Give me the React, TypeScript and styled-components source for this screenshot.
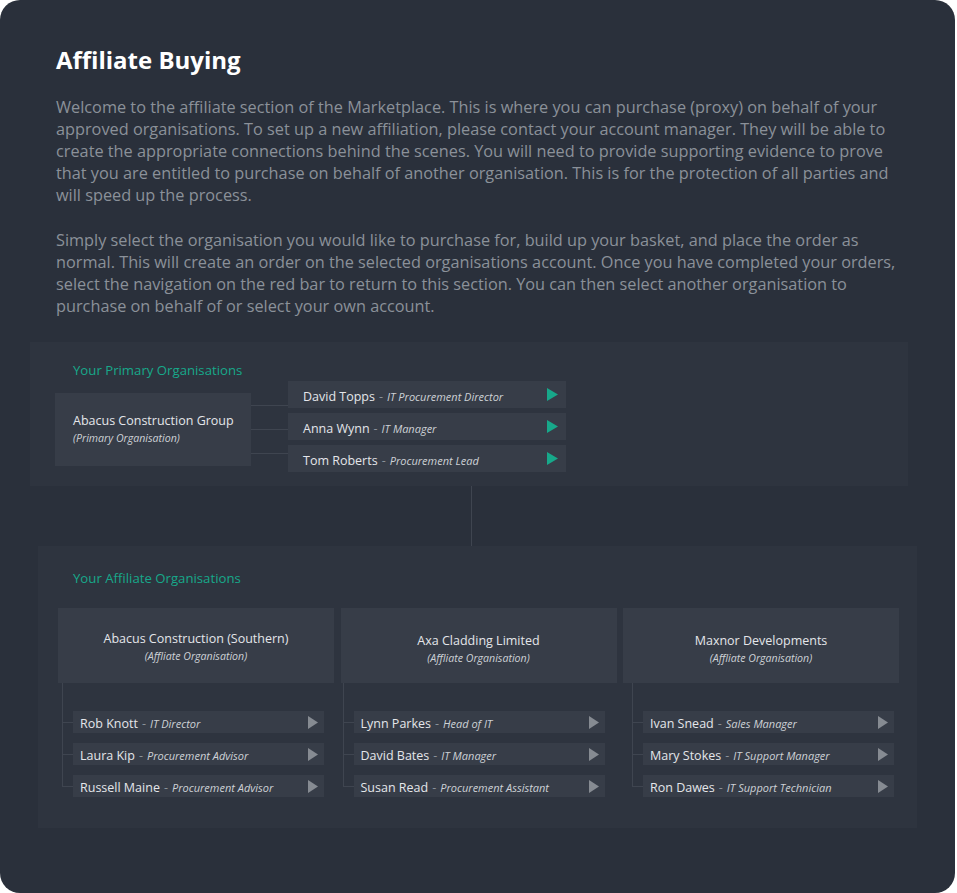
import React from "react";
import styled, { createGlobalStyle } from "styled-components";

const C = {
  page: "#ffffff",
  card: "#2a303b",
  panel: "#2e343f",
  box: "#373d48",
  line: "#3f4550",
  teal: "#17a88a",
  text: "#e4e6ea",
  role: "#cdd1d6",
  muted: "#8b9199",
  arrow: "#868b92",
};

const FONT = `"Open Sans", "Noto Sans", "Liberation Sans", sans-serif`;

const Global = createGlobalStyle`
  html, body { margin: 0; padding: 0; background: ${C.page}; }
  body { font-family: ${FONT}; }
  * { box-sizing: border-box; }
`;

const Card = styled.div`
  width: 955px;
  height: 893px;
  background: ${C.card};
  border-radius: 20px;
  padding-top: 44px;
  overflow: hidden;
`;

const Intro = styled.div`
  padding: 0 56px;
`;

const Title = styled.h1`
  margin: 0;
  font-size: 24px;
  line-height: 32px;
  font-weight: 700;
  color: #ffffff;
`;

const Para = styled.p`
  margin: 20px 0 0;
  font-size: 16.3px;
  line-height: 22px;
  color: ${C.muted};
  white-space: nowrap;
  & + & { margin-top: 23px; }
`;

const Panel = styled.section<{ $left: number; $width: number; $pt: number; $pb: number; $mt?: number }>`
  margin-left: ${(p) => p.$left}px;
  margin-top: ${(p) => p.$mt ?? 0}px;
  width: ${(p) => p.$width}px;
  background: ${C.panel};
  padding: ${(p) => p.$pt}px 0 ${(p) => p.$pb}px;
`;

const Heading = styled.h2<{ $indent: number }>`
  margin: 0;
  padding-left: ${(p) => p.$indent}px;
  font-size: 13.2px;
  line-height: 20px;
  font-weight: 400;
  color: ${C.teal};
`;

const PrimaryRow = styled.div`
  display: flex;
  align-items: flex-start;
  margin-left: 25px;
  margin-top: 1px;
`;

const OrgBox = styled.div`
  width: 196px;
  height: 73px;
  background: ${C.box};
  padding: 0 0 2px 18px;
  display: flex;
  flex-direction: column;
  justify-content: center;
  margin-top: 12px;
  white-space: nowrap;
`;

const OrgName = styled.div`
  font-size: 12.5px;
  line-height: 19px;
  color: ${C.text};
  white-space: nowrap;
`;

const OrgSub = styled.div`
  font-size: 10.6px;
  line-height: 17px;
  font-style: italic;
  color: ${C.role};
`;

const Connectors = styled.div`
  width: 37px;
  height: 73px;
  margin-top: 12px;
  display: flex;
  flex-direction: column;
  justify-content: space-around;
`;

const HLine = styled.div`
  height: 1px;
  background: ${C.line};
`;

const ContactList = styled.div<{ $gap: number }>`
  display: flex;
  flex-direction: column;
  gap: ${(p) => p.$gap}px;
`;

const Contact = styled.div<{ $primary?: boolean }>`
  display: flex;
  align-items: center;
  justify-content: space-between;
  background: ${C.box};
  height: ${(p) => (p.$primary ? 27 : 22)}px;
  width: ${(p) => (p.$primary ? 278 : 251)}px;
  padding: ${(p) => (p.$primary ? "0 8px 0 15px" : "0 6px 0 7px")};
  white-space: nowrap;
`;

const Name = styled.span`
  font-size: 12.5px;
  color: ${C.text};
`;

const Role = styled.span`
  font-size: 11px;
  font-style: italic;
  color: ${C.role};
`;

const Dash = styled.span`
  font-size: 12.5px;
  color: ${C.muted};
  margin: 0 4px;
`;

const Arrow = ({ color, w, h }: { color: string; w: number; h: number }) => (
  <svg width={w} height={h} viewBox={`0 0 ${w} ${h}`}>
    <polygon points={`0,0 ${w},${h / 2} 0,${h}`} fill={color} />
  </svg>
);

const Stem = styled.div`
  width: 1px;
  height: 60px;
  margin-left: 471px;
  background: ${C.line};
`;

const Columns = styled.div`
  display: grid;
  grid-template-columns: repeat(3, 276px);
  column-gap: 6.5px;
  margin: 20px 0 0 20px;
`;

const OrgCard = styled.div<{ $shift: number }>`
  height: 75px;
  background: ${C.box};
  display: flex;
  flex-direction: column;
  align-items: center;
  justify-content: center;
  text-align: center;
  padding-top: ${(p) => p.$shift}px;
`;

const Tree = styled.div<{ $indent: number }>`
  display: grid;
  grid-template-columns: 11px 251px;
  margin-left: ${(p) => p.$indent}px;
`;

const TreeStem = styled.div`
  grid-column: 1 / 3;
  height: 28px;
  width: 1px;
  background: ${C.line};
`;

const Branch = styled.div<{ $last?: boolean }>`
  height: ${(p) => (p.$last ? 22 : 32)}px;
  background:
    linear-gradient(${C.line}, ${C.line}) 0 11px / 100% 1px no-repeat,
    linear-gradient(${C.line}, ${C.line}) 0 0 / 1px ${(p) => (p.$last ? "12px" : "100%")} no-repeat;
`;

const Cell = styled.div`
  height: 32px;
  &:last-child { height: 22px; }
`;

type Person = [string, string];

const primary: Person[] = [
  ["David Topps", "IT Procurement Director"],
  ["Anna Wynn", "IT Manager"],
  ["Tom Roberts", "Procurement Lead"],
];

const affiliates: { name: string; indent: number; shift: number; people: Person[] }[] = [
  {
    name: "Abacus Construction (Southern)",
    indent: 4,
    shift: 3,
    people: [
      ["Rob Knott", "IT Director"],
      ["Laura Kip", "Procurement Advisor"],
      ["Russell Maine", "Procurement Advisor"],
    ],
  },
  {
    name: "Axa Cladding Limited",
    indent: 2,
    shift: 7,
    people: [
      ["Lynn Parkes", "Head of IT"],
      ["David Bates", "IT Manager"],
      ["Susan Read", "Procurement Assistant"],
    ],
  },
  {
    name: "Maxnor Developments",
    indent: 9,
    shift: 7,
    people: [
      ["Ivan Snead", "Sales Manager"],
      ["Mary Stokes", "IT Support Manager"],
      ["Ron Dawes", "IT Support Technician"],
    ],
  },
];

const PersonLabel = ({ p }: { p: Person }) => (
  <span>
    <Name>{p[0]}</Name>
    <Dash>-</Dash>
    <Role>{p[1]}</Role>
  </span>
);

export default function App() {
  return (
    <>
      <Global />
      <Card>
        <Intro>
          <Title>Affiliate Buying</Title>
          <Para>
            Welcome to the affiliate section of the Marketplace. This is where you can purchase (proxy) on behalf of your
            <br />
            approved organisations. To set up a new affiliation, please contact your account manager. They will be able to
            <br />
            create the appropriate connections behind the scenes. You will need to provide supporting evidence to prove
            <br />
            that you are entitled to purchase on behalf of another organisation. This is for the protection of all parties and
            <br />
            will speed up the process.
          </Para>
          <Para>
            Simply select the organisation you would like to purchase for, build up your basket, and place the order as
            <br />
            normal. This will create an order on the selected organisations account. Once you have completed your orders,
            <br />
            select the navigation on the red bar to return to this section. You can then select another organisation to
            <br />
            purchase on behalf of or select your own account.
          </Para>
        </Intro>

        <Panel $left={30} $width={878} $pt={18} $pb={14} $mt={25}>
          <Heading $indent={43}>Your Primary Organisations</Heading>
          <PrimaryRow>
            <OrgBox>
              <OrgName>Abacus Construction Group</OrgName>
              <OrgSub>(Primary Organisation)</OrgSub>
            </OrgBox>
            <Connectors>
              <HLine />
              <HLine />
              <HLine />
            </Connectors>
            <ContactList $gap={5}>
              {primary.map((p) => (
                <Contact $primary key={p[0]}>
                  <PersonLabel p={p} />
                  <Arrow color={C.teal} w={11} h={13} />
                </Contact>
              ))}
            </ContactList>
          </PrimaryRow>
        </Panel>

        <Stem />

        <Panel $left={38} $width={879} $pt={22} $pb={31}>
          <Heading $indent={35}>Your Affiliate Organisations</Heading>
          <Columns>
            {affiliates.map((a) => (
              <div key={a.name}>
                <OrgCard $shift={a.shift}>
                  <OrgName>{a.name}</OrgName>
                  <OrgSub>(Affliate Organisation)</OrgSub>
                </OrgCard>
                <Tree $indent={a.indent}>
                  <TreeStem />
                  {a.people.map((p, i) => {
                    const last = i === a.people.length - 1;
                    return (
                      <React.Fragment key={p[0]}>
                        <Branch $last={last} />
                        <Cell>
                          <Contact>
                            <PersonLabel p={p} />
                            <Arrow color={C.arrow} w={10} h={13} />
                          </Contact>
                        </Cell>
                      </React.Fragment>
                    );
                  })}
                </Tree>
              </div>
            ))}
          </Columns>
        </Panel>
      </Card>
    </>
  );
}
